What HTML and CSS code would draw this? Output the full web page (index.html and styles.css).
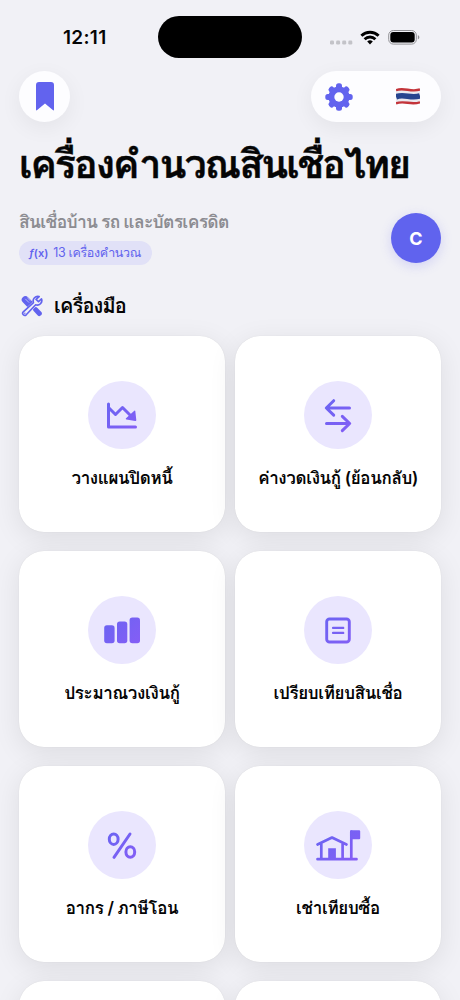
FILE: index.html
```html
<!DOCTYPE html>
<html lang="th">
<head>
<meta charset="utf-8">
<title>เครื่องคำนวณสินเชื่อไทย</title>
<link rel="stylesheet" href="styles.css">
</head>
<body>
<svg class="defs" width="0" height="0" aria-hidden="true">
  <defs>
    <linearGradient id="violet" gradientUnits="userSpaceOnUse" x1="12" y1="12" x2="56" y2="56">
      <stop offset="0" stop-color="#6366f1"/><stop offset="1" stop-color="#8b5cf6"/>
    </linearGradient>
  </defs>
</svg>
<div class="screen">
  <header class="status">
    <span class="time">12:11</span>
    <span class="island"></span>
    <svg class="signals" width="90" height="16" viewBox="0 0 90 16">
      <g fill="#c3c3c8"><rect y="11.6" width="4" height="4" rx="1.3"/><rect x="6.1" y="11.6" width="4" height="4" rx="1.3"/><rect x="12.2" y="11.6" width="4" height="4" rx="1.3"/><rect x="18.3" y="11.6" width="4" height="4" rx="1.3"/></g>
      <g fill="none" stroke="#000" stroke-width="2.9"><path d="M31.4 6.700a12.300 12.300 0 0 1 17.200 0"/><path d="M34.600 10.200a7.800 7.800 0 0 1 10.800 0"/></g>
      <path d="M40 15.400l-2.800-2.900a4 4 0 0 1 5.600 0z"/>
      <rect x="58.7" y="1.500" width="27.6" height="13.6" rx="4.6" fill="none" stroke="#929296"/>
      <rect x="60.300" y="3.100" width="24.400" height="10.400" rx="3"/><path d="M87.9 6.100c2 .8 2 3.6 0 4.4z" fill="#929296"/>
    </svg>
  </header>
  <nav class="toolbar">
    <button class="round"><svg width="18" height="29" viewBox="0 0 18 29"><path d="M3 0h12q3 0 3 3v24.500q0 1.600-1.200.5L9 21.500 1.200 28Q0 29.100 0 27.500V3q0-3 3-3z" fill="#6263ee"/></svg></button>
    <div class="pill">
      <svg width="28" height="28" viewBox="-14 -14 28 28">
        <g fill="#6263ee"><rect x="-3" y="-13.700" width="6" height="27.400" rx="2.500"/><rect x="-3" y="-13.300" width="6" height="26.600" rx="2.500" transform="rotate(45)"/><rect x="-3" y="-13.700" width="6" height="27.400" rx="2.500" transform="rotate(90)"/><rect x="-3" y="-13.300" width="6" height="26.600" rx="2.500" transform="rotate(135)"/><circle r="10.600"/></g><circle r="4.700" fill="#fdfdff"/>
      </svg>
      <svg width="24" height="17" viewBox="0 0 24 17">
        <g fill="none">
          <path d="M0 2C8-1.500 15 4.200 24 .9v13.600C15 18 8 12.600 0 16z" fill="#eae9ef"/>
          <path d="M0 2.200C8-1 15 4.600 24 1.500" stroke="#c3343a" stroke-width="2.400"/>
          <path d="M0 8.800C8 5.500 15 11 24 7.900" stroke="#26448f" stroke-width="5.600"/>
          <path d="M0 15.400C8 12.200 15 17.400 24 14.300" stroke="#c3343a" stroke-width="2.400"/>
        </g>
      </svg>
    </div>
  </nav>
  <h1 class="title">เครื่องคำนวณสินเชื่อไทย</h1>
  <section class="profile">
    <div class="about">
      <p class="subtitle">สินเชื่อบ้าน รถ และบัตรเครดิต</p>
      <p class="chip"><b class="fx"><i>ƒ</i>(x)</b><span>13 เครื่องคำนวณ</span></p>
    </div>
    <div class="avatar">C</div>
  </section>
  <h2 class="section">
    <svg width="22" height="22" viewBox="0 0 24 24">
      <g fill="none" stroke="#6263ee" stroke-linecap="round" stroke-linejoin="round">
        <path d="M4.800 5.200l5 5" stroke-width="8"/>
        <path d="M11 11l4 4" stroke-width="2.400"/><path d="M16 16l4 4.200" stroke-width="5.400"/>
        <path d="M15 9.500L4 20" stroke="#f1f1f6" stroke-width="6"/>
        <path d="M19.800 1.700a5 5 0 0 0-6.200 6.500L2.500 18.300a2.300 2.300 0 0 0 3.200 3.300L16 10.700a5 5 0 0 0 6.400-6.400l-3.300 3-2.700-2.500z" stroke-width="1.800"/>
        <path d="M5 4.500l3.500 3.500M7.200 3.300L10 6" stroke="#d9d9fa" stroke-width=".8"/>
      </g>
      <circle cx="4.200" cy="19.900" r=".8" fill="#6263ee"/>
    </svg>
    <span>เครื่องมือ</span>
  </h2>
  <main class="grid">
    <article class="card"><div class="badge"><svg width="68" height="68" viewBox="0 0 68 68"><g fill="none" stroke="url(#violet)" stroke-width="3" stroke-linecap="round" stroke-linejoin="round"><path d="M20.500 23v23h27"/><path d="M21 27l6.500 6.500 7-7L43 35"/></g><path d="M46.300 29.800q.8-.9 1 .3l1 8.800q.1 1.200-1.100 1l-8.800-1.500q-1.200-.4-.4-1.200z" fill="url(#violet)"/></svg></div><h3>วางแผนปิดหนี้</h3></article>
    <article class="card"><div class="badge"><svg width="68" height="68" viewBox="0 0 68 68"><path d="M45.500 27H22.500m7.200-7.300L22.300 27l7.400 7.200M22.500 42.500h23m-7.200-7.200l7.400 7.200-7.400 7.200" fill="none" stroke="url(#violet)" stroke-width="3" stroke-linecap="round" stroke-linejoin="round"/></svg></div><h3>ค่างวดเงินกู้ (ย้อนกลับ)</h3></article>
    <article class="card"><div class="badge"><svg width="68" height="68" viewBox="0 0 68 68" fill="url(#violet)"><rect x="16.200" y="29.300" width="10.400" height="18" rx="2.700"/><rect x="29" y="25.500" width="10.300" height="21.800" rx="2.700"/><rect x="41.600" y="21.500" width="10.400" height="25.800" rx="2.700"/></svg></div><h3>ประมาณวงเงินกู้</h3></article>
    <article class="card"><div class="badge"><svg width="68" height="68" viewBox="0 0 68 68" fill="none" stroke="url(#violet)" stroke-linecap="round"><rect x="22.700" y="23" width="22.600" height="23" rx="2.800" stroke-width="2.900"/><path d="M29 31.900h10.300l.01.01M29 36.900h10.300l.01.01" stroke-width="2.200"/></svg></div><h3>เปรียบเทียบสินเชื่อ</h3></article>
    <article class="card"><div class="badge"><svg width="68" height="68" viewBox="0 0 68 68" fill="none" stroke="url(#violet)" stroke-width="3" stroke-linecap="round"><ellipse cx="25.700" cy="28.200" rx="4.400" ry="5.200"/><ellipse cx="42.300" cy="41" rx="4.400" ry="5.200"/><path d="M42 23L26 46.300"/></svg></div><h3>อากร / ภาษีโอน</h3></article>
    <article class="card"><div class="badge"><svg width="68" height="68" viewBox="0 0 68 68"><g fill="none" stroke="url(#violet)" stroke-width="2.700" stroke-linecap="round" stroke-linejoin="round"><path d="M13.500 33.500L28 26.500l14.500 7M17.300 32.500v15M38.600 32.500v15M13.500 48.200h39M47.300 20.500v27"/></g><path d="M24.200 37.300h7.700v11h-7.700zM46.500 19.300h8.700q1 0 1 1v7q0 1-1 1h-8.700z" fill="url(#violet)"/></svg></div><h3>เช่าเทียบซื้อ</h3></article>
    <article class="card"></article>
    <article class="card"></article>
  </main>
</div>
</body>
</html>
```
FILE: styles.css
```css
* { box-sizing: border-box; margin: 0; padding: 0; }
body { background: #f1f1f6; color: #050505; font-family: "Inter", "Loma", monospace; overflow: hidden; }
svg { display: block; flex: none; }
.defs { position: absolute; }
.screen { height: 1000px; overflow: hidden; padding: 0 19px; }
.status { height: 71px; display: grid; grid-template-columns: 139px 144px 1fr; align-items: start; padding-top: 16px; }
.time { padding: 10px 0 0 44px; font-size: 19px; line-height: 23px; font-weight: 600; letter-spacing: .3px; }
.island { height: 42px; border-radius: 21px; background: #000; }
.signals { margin: 13px 0 0 28px; }
.toolbar { height: 51px; display: flex; justify-content: space-between; }
.round, .pill { border: 0; background: #fdfdff; border-radius: 26px; height: 51px; display: flex; align-items: center; box-shadow: 0 6px 22px rgba(0,0,0,.06); }
.round { width: 51px; justify-content: center; }
.pill { width: 130px; padding: 0 21px 0 14px; justify-content: space-between; }
.title { height: 82px; padding-top: 17px; font-size: 39.5px; line-height: 50px; font-weight: 700; letter-spacing: -2.05px; white-space: nowrap; -webkit-text-stroke: .4px #050505; }
.profile { height: 72px; display: flex; justify-content: space-between; }
.avatar { width: 50px; height: 50px; margin-top: 9px; border-radius: 50%; background: #6063ee; color: #fff; display: grid; place-items: center; font-size: 18px; font-weight: 700; box-shadow: 0 3px 12px rgba(99,102,241,.22); }
.subtitle { height: 37px; padding-top: 5px; font-size: 17.5px; line-height: 26px; font-weight: 600; letter-spacing: -.7px; color: #8c8c91; white-space: nowrap; }
.chip { width: 133px; height: 24px; border-radius: 12px; background: #e1e1f7; color: #6263ee; display: flex; align-items: center; padding-left: 10px; gap: 5px; font-size: 12.5px; letter-spacing: -.35px; white-space: nowrap; }
.fx { font-size: 11px; font-weight: 600; letter-spacing: 0; }
.section { height: 60px; padding: 0 0 0 2px; display: flex; align-items: center; gap: 11px; font-size: 20px; font-weight: 700; letter-spacing: -.85px; }
.grid { display: grid; grid-template-columns: 206px 206px; grid-auto-rows: 196px; gap: 19px 10px; }
.card { background: #fff; border-radius: 25px; display: flex; flex-direction: column; align-items: center; padding-top: 45px; box-shadow: 0 0 1px rgba(0,0,0,.12), 0 6px 28px rgba(0,0,0,.085); }
.badge { width: 68px; height: 68px; border-radius: 50%; background: #eae6fe; }
.card h3 { margin-top: 16px; font-size: 17px; line-height: 26px; font-weight: 600; letter-spacing: -.35px; white-space: nowrap; }
```
